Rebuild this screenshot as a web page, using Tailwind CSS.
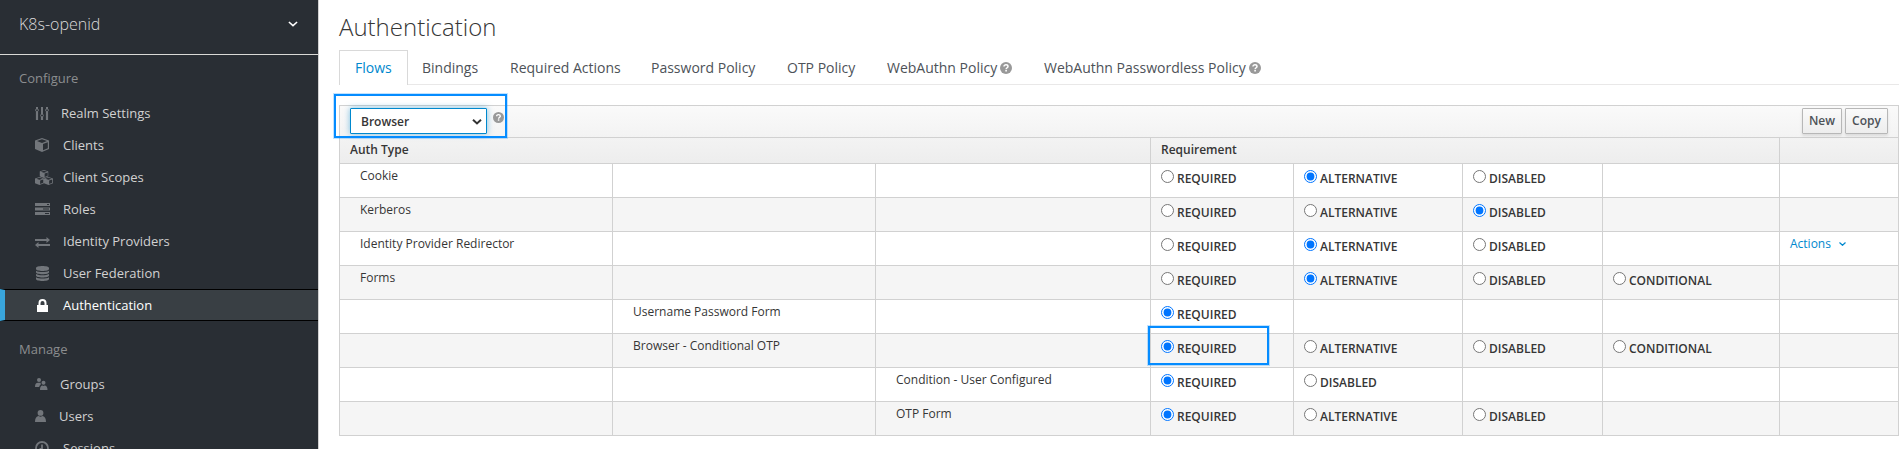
<!DOCTYPE html>
<html lang="en">
<head>
<meta charset="utf-8">
<title>Authentication</title>
<script src="https://cdn.jsdelivr.net/npm/@tailwindcss/browser@4"></script>
</head>
<body class="flex h-[449px] overflow-hidden bg-white font-['Open_Sans',sans-serif] text-[12px] leading-5 text-[#363636]">
<svg class="hidden">
  <symbol id="help" viewBox="0 0 12 12"><circle cx="6" cy="6" r="6" fill="#999"/><path d="M4 4.6C4 3.4 4.9 2.8 6 2.8s2 .7 2 1.7C8 5.7 6.1 5.8 6.1 7.3" fill="none" stroke="#fff" stroke-width="1.5"/><rect x="5.3" y="8" width="1.6" height="1.5" fill="#fff"/></symbol>
  <symbol id="cube" viewBox="0 0 14 14" preserveAspectRatio="none"><path d="M7 0 14 2.500V11L7 14 0 11V2.500ZM7 1.200 2 3 7 4.900 12 3ZM8 12.300 12.800 10.200V4.200L8 6Z" fill-rule="evenodd"/></symbol>
</svg>

<aside class="h-[449px] w-[319px] shrink-0 overflow-hidden border-r border-[#d1d1d1] bg-[#292e34]">
  <div class="flex h-[55px] items-center justify-between border-b border-[#d9d9d6] pr-[20px] pb-[6px] pl-[19px] text-[16px] font-light text-[#dbdada]">
    <span>K8s-openid</span>
    <svg class="h-[6px] w-[10px]" viewBox="0 0 11 6" fill="none" stroke="#fff" stroke-width="1.7"><path d="M1 .8 5.500 4.800 10 .8"/></svg>
  </div>
  <h2 class="mt-[13px] pl-[19px] text-[13px] leading-5 text-[#8b8d8f]">Configure</h2>
  <nav class="mt-[9px] text-[13px] leading-[30px] text-[#d1d1d1] *:flex *:h-8 *:items-center *:pl-[35px]">
    <a><svg class="mr-[12px] h-[13px] w-[14px] text-[#72767b]" viewBox="0 0 14 13" fill="none" stroke="currentColor"><path d="M2 5v8M7 10v3M12 5v8" stroke-width="2.200"/><path d="M7 0v7M2 0v2M12 0v2" stroke-width="2"/><circle cx="2" cy="3.200" r="1.400"/><circle cx="7" cy="8.500" r="1.400"/><circle cx="12" cy="3.200" r="1.400"/></svg>Realm Settings</a>
    <a><svg class="mr-[14px] h-[14px] w-[14px] text-[#72767b]" fill="currentColor"><use href="#cube" width="14" height="14"/></svg>Clients</a>
    <a><svg class="mr-[10px] h-[15px] w-[18px] text-[#72767b]" viewBox="0 0 18 15" fill="currentColor"><use href="#cube" x="4.500" y="0" width="9" height="8"/><use href="#cube" x="0" y="7" width="9" height="8"/><use href="#cube" x="9" y="7" width="9" height="8"/></svg>Client Scopes</a>
    <a><svg class="mr-[13px] h-[12px] w-[15px] text-[#72767b]" viewBox="0 0 15 12" fill="currentColor"><path fill-rule="evenodd" d="M0 0h15v3H0ZM12 1v1h2v-1ZM0 4.500h15v3H0ZM8 5.500v1h6v-1ZM0 9h15v3H0ZM10 10v1h4v-1Z"/></svg>Roles</a>
    <a><svg class="mt-[3px] mr-[13px] h-[11px] w-[15px] text-[#72767b]" viewBox="0 0 15 11" fill="currentColor"><path d="M0 2h11.500V0L15 3l-3.500 3V4H0ZM15 7H3.500V5L0 8l3.500 3V9H15Z"/></svg>Identity Providers</a>
    <a><svg class="mt-[1px] mr-[14px] ml-[1px] h-[15px] w-[13px] text-[#72767b]" viewBox="0 0 13 15" fill="currentColor"><path d="M0 2C0 .8 3 0 6.500 0S13 .8 13 2v1C13 4.200 10 5 6.500 5S0 4.200 0 3ZM0 4.700C1.500 5.700 4 6 6.500 6S11.500 5.700 13 4.700V6.300C13 7.500 10 8.300 6.500 8.300S0 7.500 0 6.300ZM0 8C1.500 9 4 9.300 6.500 9.300S11.500 9 13 8V9.600C13 10.800 10 11.600 6.500 11.600S0 10.800 0 9.600ZM0 11.300C1.500 12.300 4 12.600 6.500 12.600S11.500 12.300 13 11.300V13C13 14.200 10 15 6.500 15S0 14.200 0 13Z"/></svg>User Federation</a>
    <a class="border-y border-l-5 border-y-black border-l-[#39a5dc] bg-[#393f44] pl-[32px]! text-white"><svg class="mr-[15px] h-[13px] w-[11px]" viewBox="0 0 11 13" fill="#fff"><path fill-rule="evenodd" d="M0 6h1.500V4a4 4 0 0 1 8 0v2H11v7H0ZM3.500 6h4V4a2 2 0 0 0-4 0Z"/></svg>Authentication</a>
  </nav>
  <h2 class="mt-[18px] pl-[19px] text-[13px] leading-5 text-[#8b8d8f]">Manage</h2>
  <nav class="mt-[9px] text-[13px] leading-[30px] text-[#d1d1d1] *:flex *:h-8 *:items-center *:pl-[35px]">
    <a><svg class="mr-[12px] h-[12px] w-[13px] text-[#72767b]" viewBox="0 0 13 12" fill="currentColor"><circle cx="4" cy="2" r="2"/><circle cx="8.500" cy="4.800" r="2"/><path d="M0 9C0 6 1 4.700 3 4.700H5.500C6 6 6 6.500 5 7.200 4.400 8 4.300 8.500 4.200 9ZM5 12C5 9 5.800 7.500 7.500 7.500l1 .5 1-.5C11.500 7.500 12.500 9 12.500 12Z"/></svg>Groups</a>
    <a><svg class="mr-[13px] h-[12px] w-[11px] text-[#72767b]" viewBox="0 0 11 12" fill="currentColor"><circle cx="5.500" cy="2.900" r="2.900"/><path d="M0 12C0 8.500 1 6.500 3.300 6l2.200.8L7.700 6C10 6.500 11 8.500 11 12Z"/></svg>Users</a>
    <a><svg class="mr-[14px] h-[14px] w-[14px] text-[#72767b]" viewBox="0 0 14 14" fill="none" stroke="currentColor" stroke-width="1.800"><circle cx="7" cy="7" r="6"/><path d="M7 3.500V8H4.500"/></svg>Sessions</a>
  </nav>
</aside>

<main class="relative w-[1582px] pl-[20px]">
  <h1 class="mt-[11px] h-[39px] text-[24px] leading-[31px] font-light text-[#363636]">Authentication</h1>
  <div class="flex h-[35px] w-[1560px] border-b border-[#e9e8e8] text-[14px] leading-[36px] text-[#4d5258]">
    <a class="h-[35px] w-[69px] border border-b-0 border-[#d9d9d9] bg-white pl-[15px] leading-[34px] text-[#0088ce]">Flows</a>
    <a class="ml-[14px] w-[88px]">Bindings</a>
    <a class="w-[141px]">Required Actions</a>
    <a class="w-[136px]">Password Policy</a>
    <a class="w-[100px]">OTP Policy</a>
    <a class="flex h-[36px] w-[157px] items-center gap-[3px]">WebAuthn Policy <svg class="size-3"><use href="#help"/></svg></a>
    <a class="flex h-[36px] items-center gap-[3px]">WebAuthn Passwordless Policy <svg class="size-3"><use href="#help"/></svg></a>
  </div>

  <section class="mt-[20px] w-[1560px] border-t border-r border-[#d1d1d1]">
    <div class="bg-linear-to-b from-[#fafafa] to-[#ededed]">
      <div class="flex h-8 border-b border-l border-[#d1d1d1] pt-[2px] pl-[10px]">
        <div class="flex h-[26px] w-[137px] items-center justify-between rounded-[1px] border border-[#0088ce] bg-white pt-[2px] pr-[4px] pl-[10px] font-semibold shadow-[0_0_6px_rgba(0,136,206,0.5)]">Browser<svg class="h-[6px] w-[10px]" viewBox="0 0 10 6" fill="none" stroke="#333" stroke-width="2"><path d="M1 .8 5 4.500 9 .8"/></svg></div>
        <svg class="mt-[4px] ml-[6px] size-[11px]"><use href="#help"/></svg>
        <div class="mr-[10px] ml-auto flex gap-[3px] font-semibold text-[#4d5258] *:h-[26px] *:rounded-[1px] *:border *:border-[#b7b7b7] *:bg-linear-to-b *:from-[#fafafa] *:to-[#ededed] *:text-center *:leading-[24px] *:shadow-[0_2px_3px_rgba(3,3,3,0.1)]">
          <button class="w-10">New</button><button class="w-[43px]">Copy</button>
        </div>
      </div>
      <div class="grid h-[26px] grid-cols-[811px_629px_119px] text-[12px] leading-[24px] font-semibold *:border-b *:border-l *:border-[#d1d1d1] *:pl-[10px]">
        <div>Auth Type</div><div>Requirement</div><div></div>
      </div>
    </div>
    <div id="rows" class="*:grid *:h-[34px] *:grid-cols-[273px_263px_275px_143px_169px_140px_177px_119px] *:even:bg-[#f5f5f5]"></div>
  </section>

  <div class="absolute top-[94px] left-[15px] h-[44px] w-[173px] border-2 border-[#058cff] shadow-[0_0_0_1px_rgba(5,140,255,0.25)]"></div>
  <div class="absolute top-[326px] left-[829px] h-[39px] w-[121px] border-2 border-[#058cff] shadow-[0_0_0_1px_rgba(5,140,255,0.25)]"></div>
</main>

<script>
  // [name, nesting level, options, index of the selected option, has actions menu]
  const executions = [
    ['Cookie', 0, ['REQUIRED', 'ALTERNATIVE', 'DISABLED'], 1],
    ['Kerberos', 0, ['REQUIRED', 'ALTERNATIVE', 'DISABLED'], 2],
    ['Identity Provider Redirector', 0, ['REQUIRED', 'ALTERNATIVE', 'DISABLED'], 1, true],
    ['Forms', 0, ['REQUIRED', 'ALTERNATIVE', 'DISABLED', 'CONDITIONAL'], 1],
    ['Username Password Form', 1, ['REQUIRED'], 0],
    ['Browser - Conditional OTP', 1, ['REQUIRED', 'ALTERNATIVE', 'DISABLED', 'CONDITIONAL'], 0],
    ['Condition - User Configured', 2, ['REQUIRED', 'DISABLED'], 0],
    ['OTP Form', 2, ['REQUIRED', 'ALTERNATIVE', 'DISABLED'], 0],
  ];
  const cell = (content) => `<div class="border-b border-l border-[#d1d1d1]">${content}</div>`;
  const radio = (label, row, on) => `<label class="flex pl-[10px]"><input type="radio" name="r${row}" class="mt-[6px] size-[13px] shrink-0" ${on ? 'checked' : ''}><span class="mt-[5px] ml-[3px] font-semibold">${label}</span></label>`;
  document.getElementById('rows').innerHTML = executions.map(([name, level, options, selected, actions], row) => {
    let cells = '';
    for (let i = 0; i < 3; i++) cells += cell(i === level ? `<div class="pt-[2px] pl-[20px]">${name}</div>` : '');
    for (let i = 0; i < 4; i++) cells += cell(options[i] ? radio(options[i], row, i === selected) : '');
    cells += cell(actions ? '<div class="flex items-center pt-[2px] pl-[10px] text-[#0088ce]">Actions<svg class="ml-[8px] h-[4px] w-[7px]" viewBox="0 0 7 4" fill="none" stroke="#0088ce" stroke-width="1.2"><path d="M.5 .5 3.500 3.300 6.500 .5"/></svg></div>' : '');
    return `<div>${cells}</div>`;
  }).join('');
</script>
</body>
</html>
